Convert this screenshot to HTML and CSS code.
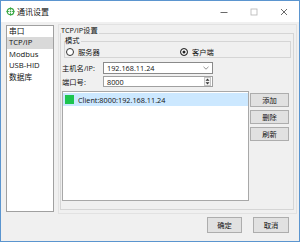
FILE: index.html
```html
<!DOCTYPE html>
<html lang="zh-CN">
<head>
    <meta charset="UTF-8">
    <title>通讯设置</title>
    <link rel="stylesheet" href="styles.css">
</head>
<body>
    <div class="window">
        <div class="titlebar">
            <svg class="app-icon" viewBox="0 0 10 10">
                <circle cx="5" cy="5" r="3.6" fill="none" stroke="#3aa845" stroke-width="1.4"/>
                <path d="M5 0.5V3.2M5 6.8V9.5M0.5 5H3.2M6.8 5H9.5" stroke="#3aa845" stroke-width="1.1"/>
                <circle cx="5" cy="5" r="1" fill="#3aa845"/>
            </svg>
            <span class="title">通讯设置</span>
            <div class="controls">
                <div class="ctl">
                    <svg viewBox="0 0 8 8" width="8" height="8"><path d="M0.5 4.5H7.5" stroke="#444" stroke-width="0.8"/></svg>
                </div>
                <div class="ctl">
                    <svg viewBox="0 0 8 8" width="8" height="8"><rect x="1" y="1" width="6" height="6" fill="none" stroke="#b5b5b5" stroke-width="0.8"/></svg>
                </div>
                <div class="ctl">
                    <svg viewBox="0 0 8 8" width="8" height="8"><path d="M1 1L7 7M7 1L1 7" stroke="#444" stroke-width="0.8"/></svg>
                </div>
            </div>
        </div>

        <div class="main">
            <ul class="nav">
                <li>串口</li>
                <li class="active">TCP/IP</li>
                <li>Modbus</li>
                <li>USB-HID</li>
                <li>数据库</li>
            </ul>

            <div class="panel">
                <div class="group settings">
                    <span class="group-title">TCP/IP设置</span>

                    <div class="group mode">
                        <span class="group-title">模式</span>
                        <div class="radios">
                            <label class="radio"><span class="circle"></span>服务器</label>
                            <label class="radio"><span class="circle checked"></span>客户端</label>
                        </div>
                    </div>

                    <div class="field host">
                        <span class="label">主机名/IP:</span>
                        <div class="combo">
                            192.168.11.24
                            <svg class="chevron" viewBox="0 0 6 4" width="6" height="4"><path d="M0.5 0.8L3 3.2L5.5 0.8" fill="none" stroke="#777" stroke-width="0.8"/></svg>
                        </div>
                    </div>

                    <div class="field port">
                        <span class="label">端口号:</span>
                        <div class="combo spin">
                            8000
                            <div class="spin-btn">
                                <svg viewBox="0 0 5 7" width="5" height="7"><path d="M2.5 0.5L4.5 2.8H0.5Z M2.5 6.5L4.5 4.2H0.5Z" fill="#333"/></svg>
                            </div>
                        </div>
                    </div>

                    <div class="list-row">
                        <div class="list">
                            <div class="item selected"><span class="status"></span>Client:8000:192.168.11.24</div>
                        </div>
                        <div class="side">
                            <button class="btn">添加</button>
                            <button class="btn">删除</button>
                            <button class="btn">刷新</button>
                        </div>
                    </div>
                </div>
            </div>
        </div>

        <div class="footer">
            <button class="btn ok">确定</button>
            <button class="btn cancel">取消</button>
        </div>
    </div>
</body>
</html>
```

FILE: styles.css
```css
* {
    box-sizing: border-box;
}

body {
    margin: 0;
    font-family: "Open Sans", "Noto Sans CJK SC", sans-serif;
    font-size: 7.3px;
    color: #111;
    background: #fff;
}

.window {
    width: 300px;
    height: 242px;
    border: 1px solid #5b95cf;
    background: #f0f0f0;
    display: flex;
    flex-direction: column;
}

/* title bar */

.titlebar {
    height: 21px;
    flex-shrink: 0;
    background: #fff;
    display: flex;
    align-items: center;
    padding-left: 5px;
}

.app-icon {
    width: 9px;
    height: 9px;
}

.title {
    margin-left: 2px;
    font-size: 8px;
}

.controls {
    margin-left: auto;
    height: 100%;
    display: flex;
}

.ctl {
    width: 30px;
    display: flex;
    align-items: center;
    justify-content: center;
}

/* body */

.main {
    height: 192px;
    flex-shrink: 0;
    display: flex;
    padding: 2px 0 0 5px;
}

.nav {
    list-style: none;
    margin: 1px 0 0;
    padding: 0;
    width: 48px;
    height: 187px;
    border: 1px solid #a0a0a0;
    background: #fff;
    font-size: 7.7px;
}

.nav li {
    height: 11.4px;
    line-height: 11.4px;
    padding-left: 2px;
    white-space: nowrap;
}

.nav .active {
    background: #d9d9d9;
}

.panel {
    margin-left: 4px;
    width: 239px;
    height: 190px;
    border: 1px solid #e2e2e2;
}

.group {
    position: relative;
    border: 1px solid #d5d5d5;
}

.group-title {
    position: absolute;
    left: 0;
    line-height: 10px;
    padding-right: 1px;
    background: #f0f0f0;
    white-space: nowrap;
}

.settings {
    margin: 8px 0 0 1px;
    width: 234px;
    height: 177px;
}

.settings > .group-title {
    top: -9px;
}

.mode {
    margin: 7px 0 0 3px;
    width: 227px;
    height: 17px;
}

.mode > .group-title {
    top: -7px;
}

.radios {
    display: grid;
    grid-template-columns: 114px auto;
    padding: 5px 0 0 1px;
}

.radio {
    display: flex;
    align-items: center;
    line-height: 10px;
}

.circle {
    width: 8px;
    height: 8px;
    margin-right: 4px;
    border: 1px solid #333;
    border-radius: 50%;
    background: #fff;
}

.circle.checked {
    background: #222;
    box-shadow: inset 0 0 0 1.5px #fff;
}

.field {
    display: flex;
    align-items: center;
    margin-left: 1px;
}

.host {
    margin-top: 4px;
}

.port {
    margin-top: 2px;
}

.label {
    width: 41px;
    white-space: nowrap;
}

.combo {
    width: 110px;
    height: 12px;
    display: flex;
    align-items: center;
    padding-left: 3px;
    border: 1px solid #8a8a8a;
    background: #fff;
}

.chevron {
    margin-left: auto;
    margin-right: 3px;
}

.spin {
    height: 11px;
    border-color: #a0a0a0;
}

.spin-btn {
    margin-left: auto;
    margin-right: 1px;
    width: 7px;
    height: 9px;
    display: flex;
    align-items: center;
    justify-content: center;
    border: 1px solid #c4c4c4;
    background: #f4f4f4;
}

.list-row {
    display: flex;
    margin: 4px 0 0 1px;
}

.list {
    width: 187px;
    height: 110px;
    padding-top: 1px;
    border: 1px solid #a8a8a8;
    background: #fff;
}

.item {
    height: 13px;
    display: flex;
    align-items: center;
    padding-left: 2px;
    white-space: nowrap;
}

.item.selected {
    background: #cce8ff;
}

.status {
    width: 9px;
    height: 9px;
    margin-right: 4px;
    background: #1dc54f;
}

.side {
    margin-left: 1px;
    padding-top: 2px;
    display: flex;
    flex-direction: column;
    gap: 3px;
}

.btn {
    width: 39px;
    height: 14px;
    padding: 0;
    border: 1px solid #adadad;
    background: #e1e1e1;
    font: inherit;
    color: #111;
}

/* footer */

.footer {
    flex: 1;
    display: flex;
    justify-content: flex-end;
    gap: 11px;
    padding: 3px 10px 0 0;
}

.footer .btn {
    height: 16px;
}

.ok {
    width: 35px;
}

.cancel {
    width: 36px;
}
```
